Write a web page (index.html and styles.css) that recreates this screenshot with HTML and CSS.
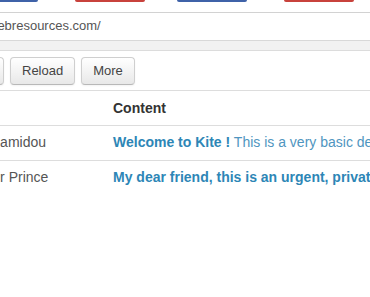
FILE: index.html
```html
<!DOCTYPE html>
<html lang="en">
<head>
  <meta charset="UTF-8" />
  <meta name="viewport" content="width=device-width, initial-scale=1" />
  <title>Kite</title>
  <link rel="stylesheet" href="styles.css">
</head>
<body>
  <div class="tabs">
    <span class="tab blue first"></span>
    <span class="tab red"></span>
    <span class="tab blue"></span>
    <span class="tab red"></span>
  </div>
  <div class="address">webresources.com/</div>
  <div class="strip"></div>

  <div class="toolbar">
    <button class="btn cut">Delete</button>
    <button class="btn">Reload</button>
    <button class="btn">More</button>
  </div>

  <table class="messages">
    <thead>
      <tr>
        <th class="col-from"></th>
        <th>Content</th>
      </tr>
    </thead>
    <tbody>
      <tr>
        <td class="col-from">Hamidou</td>
        <td><strong>Welcome to Kite !</strong> <span class="preview">This is a very basic demo of the Kite mailer.</span></td>
      </tr>
      <tr>
        <td class="col-from">Dr Prince</td>
        <td><strong>My dear friend, this is an urgent, private matter</strong></td>
      </tr>
    </tbody>
  </table>
</body>
</html>
```

FILE: styles.css
```css
html, body {
  margin: 0;
  overflow: hidden;
  background: #fff;
}
body {
  font-family: "Liberation Sans", Arial, sans-serif;
  font-size: 14px;
  line-height: 20px;
  color: #333;
  width: 370px;
}
.tabs {
  display: flex;
  height: 12px;
  border-bottom: 1px solid #d2d2d2;
  margin-left: -32px;
}
.tab {
  display: block;
  width: 70px;
  height: 2px;
  border-radius: 0 0 3px 3px;
}
.tab.blue {
  background: #3f62a8;
}
.tab.red {
  background: #c8423c;
}
.tab.first {
  margin-right: 37px;
}
.tab.red + .tab.blue {
  margin-left: 32px;
}
.tab.blue + .tab.red:last-child {
  margin-left: 37px;
}
.address {
  height: 27px;
  line-height: 26px;
  font-size: 13px;
  color: #555;
  margin-left: -12px;
  border-bottom: 1px solid #d8d8d8;
}
.strip {
  height: 9px;
  background: #f1f1f1;
  border-bottom: 1px solid #dcdcdc;
}
.toolbar {
  display: flex;
  gap: 6px;
  margin-left: -64px;
  padding: 6px 0 5px;
}
.btn {
  font-family: "Liberation Sans", Arial, sans-serif;
  font-size: 13px;
  line-height: 20px;
  color: #444;
  padding: 3px 11px;
  background: linear-gradient(#ffffff, #e8e8e8);
  border: 1px solid #cfcfcf;
  border-bottom-color: #b8b8b8;
  border-radius: 4px;
  box-shadow: inset 0 1px 0 rgba(255, 255, 255, 0.3), 0 1px 2px rgba(0, 0, 0, 0.05);
}
.btn.cut {
  width: 68px;
}
.messages {
  border-collapse: collapse;
  table-layout: fixed;
  width: 700px;
  margin-left: -18px;
}
.messages th,
.messages td {
  text-align: left;
  padding: 7px 8px;
  border-top: 1px solid #dddddd;
  white-space: nowrap;
  overflow: hidden;
}
.messages td {
  padding: 6px 8px 8px;
}
.messages th {
  font-weight: bold;
  color: #333;
}
.messages .col-from {
  width: 107px;
}
.messages td.col-from {
  color: #555;
}
.messages td strong {
  color: #2d86b6;
}
.preview {
  color: #4f95c0;
}
```
